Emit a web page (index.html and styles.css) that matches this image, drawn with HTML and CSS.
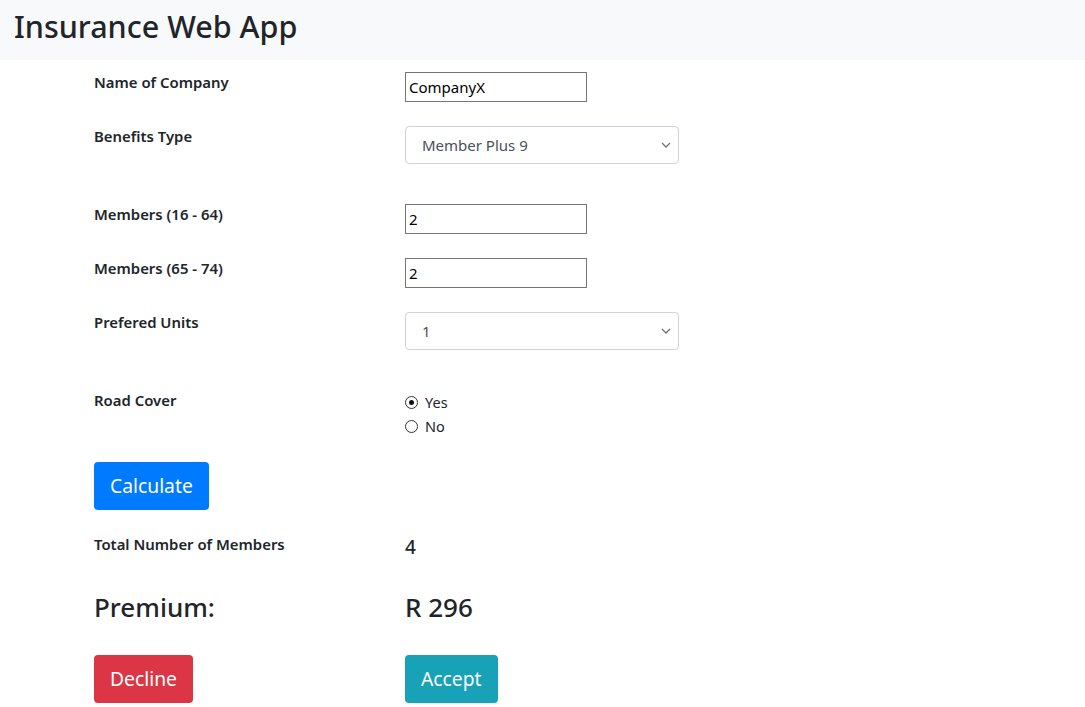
FILE: index.html
```html
<!DOCTYPE html>
<html lang="en">
<head>
<meta charset="utf-8">
<title>Insurance Web App</title>
<link rel="stylesheet" href="styles.css">
</head>
<body>
<header class="topbar">
  <h1 class="brand">Insurance Web App</h1>
</header>
<main class="form">
  <div class="row">
    <label class="lbl">Name of Company</label>
    <input class="txt" type="text" value="CompanyX">
  </div>
  <div class="row row-sel">
    <label class="lbl">Benefits Type</label>
    <div class="sel-wrap">
      <select class="sel"><option>Member Plus 9</option></select>
      <svg class="chev" width="10" height="6" viewBox="0 0 10 6"><path d="M1 1l4 4 4-4" fill="none" stroke="#6c757d" stroke-width="1.3"/></svg>
    </div>
  </div>
  <div class="row">
    <label class="lbl">Members (16 - 64)</label>
    <input class="txt" type="text" value="2">
  </div>
  <div class="row">
    <label class="lbl">Members (65 - 74)</label>
    <input class="txt" type="text" value="2">
  </div>
  <div class="row row-sel">
    <label class="lbl">Prefered Units</label>
    <div class="sel-wrap">
      <select class="sel"><option>1</option></select>
      <svg class="chev" width="10" height="6" viewBox="0 0 10 6"><path d="M1 1l4 4 4-4" fill="none" stroke="#6c757d" stroke-width="1.3"/></svg>
    </div>
  </div>
  <div class="row row-radio">
    <label class="lbl">Road Cover</label>
    <div class="radios">
      <label class="radio"><input type="radio" name="road" checked> Yes</label>
      <label class="radio"><input type="radio" name="road"> No</label>
    </div>
  </div>
  <div class="actions">
    <button class="btn btn-primary">Calculate</button>
  </div>
  <div class="row row-total">
    <span class="lbl lbl-total">Total Number of Members</span>
    <span class="total">4</span>
  </div>
  <div class="row row-premium">
    <h3 class="premium">Premium:</h3>
    <h3 class="premium">R 296</h3>
  </div>
  <div class="row row-final">
    <div><button class="btn btn-danger">Decline</button></div>
    <div><button class="btn btn-info">Accept</button></div>
  </div>
</main>
</body>
</html>
```
FILE: styles.css
```css
* { box-sizing: border-box; }
html, body { margin: 0; padding: 0; }
body {
  font-family: "Noto Sans", "Open Sans", sans-serif;
  color: #212529;
  background: #fff;
  font-size: 15px;
}
.topbar {
  background: #f8f9fa;
  height: 60px;
  padding: 4px 14px 0;
}
.brand {
  margin: 0;
  font-size: 30.5px;
  font-weight: 500;
  line-height: 44px;
}
.form {
  padding: 12px 0 0 94px;
}
.row {
  display: grid;
  grid-template-columns: 311px auto;
  align-items: start;
  margin-bottom: 24px;
}
.row-sel { margin-bottom: 40px; }
.lbl {
  font-weight: 600;
  font-size: 14.9px;
  line-height: 20px;
}
.lbl-total { padding-top: 2px; }
.txt {
  width: 182px;
  height: 30px;
  border: 1px solid #767676;
  padding: 1px 3px;
  font-family: inherit;
  font-size: 15px;
  color: #000;
  margin: 0;
}
.sel-wrap {
  position: relative;
  width: 274px;
  height: 38px;
}
.sel {
  appearance: none;
  -webkit-appearance: none;
  width: 274px;
  height: 38px;
  border: 1px solid #ced4da;
  border-radius: 4px;
  background: #fff;
  padding: 0 12px 0 16px;
  font-family: inherit;
  font-size: 15px;
  color: #495057;
  margin: 0;
}
.chev {
  position: absolute;
  right: 8px;
  top: 16px;
}
.row-radio { margin-bottom: 24px; }
.radios { display: flex; flex-direction: column; }
.radio {
  display: flex;
  align-items: center;
  font-size: 14.5px;
  line-height: 24px;
  height: 24px;
}
.radio input {
  appearance: none;
  -webkit-appearance: none;
  margin: 0 7px 0 0;
  width: 13px;
  height: 13px;
  border: 1px solid #333;
  border-radius: 50%;
  background: #fff;
  display: grid;
  place-items: center;
}
.radio input:checked::before {
  content: "";
  width: 5px;
  height: 5px;
  border-radius: 50%;
  background: #111;
}
.actions { margin-bottom: 22px; }
.btn {
  border: 0;
  border-radius: 4px;
  color: #fff;
  font-family: inherit;
  font-size: 19.3px;
  height: 48px;
  padding: 0 16px;
  line-height: 48px;
  cursor: pointer;
}
.btn-primary { background: #007bff; }
.btn-danger { background: #dc3545; }
.btn-info { background: #17a2b8; }
.row-total { margin-bottom: 28px; }
.total {
  font-size: 19px;
  font-weight: 500;
  line-height: 26px;
  padding-top: 2px;
}
.row-premium { margin-bottom: 31px; padding-top: 2px; }
.premium {
  margin: 0;
  font-size: 26px;
  font-weight: 500;
  line-height: 34px;
}
.row-final { margin-bottom: 0; }
```
